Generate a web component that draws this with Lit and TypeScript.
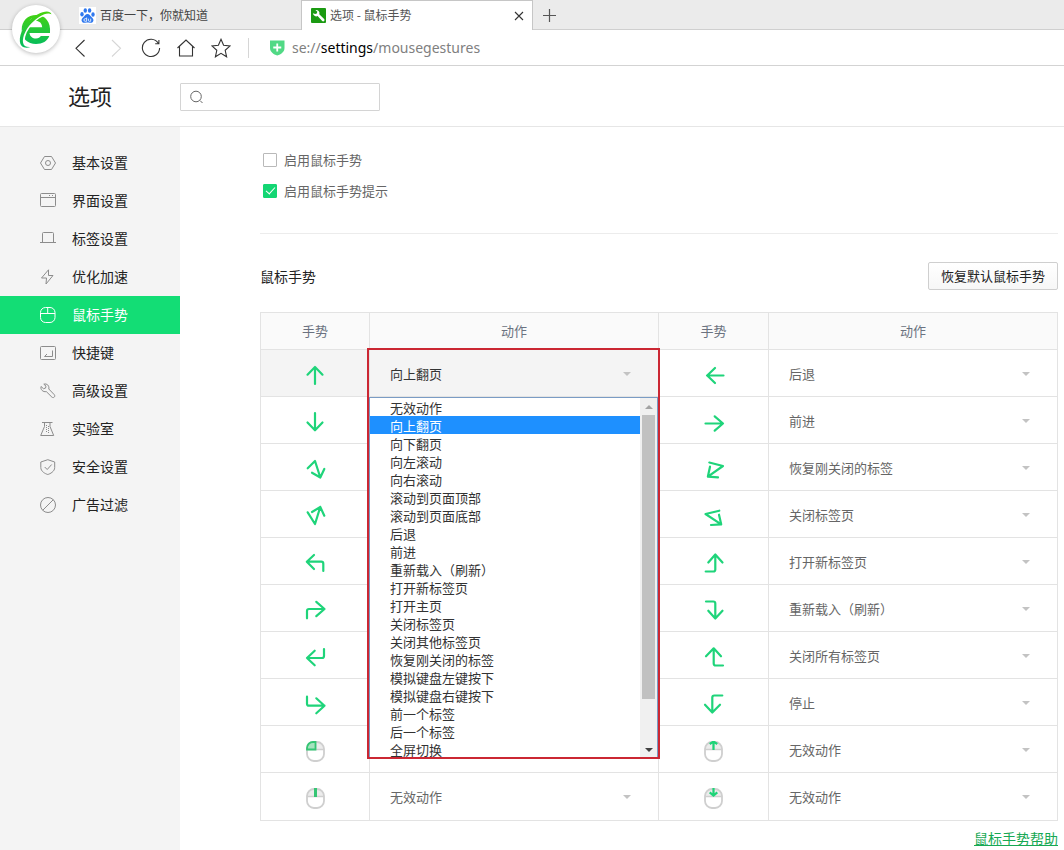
import { LitElement, html, svg, css, TemplateResult } from "lit";
import { customElement, property, state } from "lit/decorators.js";
import { classMap } from "lit/directives/class-map.js";

const FONT = css`"Noto Sans CJK SC", "Noto Sans", sans-serif`;

/* ---------- Actions offered for every gesture ---------- */
const ACTIONS = [
  "无效动作", "向上翻页", "向下翻页", "向左滚动", "向右滚动", "滚动到页面顶部", "滚动到页面底部",
  "后退", "前进", "重新载入（刷新）", "打开新标签页", "打开主页", "关闭标签页", "关闭其他标签页",
  "恢复刚关闭的标签", "模拟键盘左键按下", "模拟键盘右键按下", "前一个标签", "后一个标签", "全屏切换",
  "关闭所有标签页", "停止",
];

/* ---------- Gesture glyphs, 24 x 24 ---------- */
const stroke = (d: string) => svg`<path class="stroke" d=${d}></path>`;

const mouse = (inner: TemplateResult) => svg`
  <path d="M4 10.500V9a6 6 0 0 1 6-6h5a6 6 0 0 1 6 6v1.500z" fill="#ececec"></path>
  <path d="M12.500 3v7.500M4 10.500h17" fill="none" stroke="#cfcfcf" stroke-width="1.600"></path>
  <rect x="4" y="3" width="17" height="19" rx="7" fill="none" stroke="#cfcfcf" stroke-width="1.800"></rect>
  ${inner}`;

const GLYPHS: Record<string, TemplateResult> = {
  up: stroke("M12 21V4M4.500 11.700L12 4l7.500 7.700"),
  down: stroke("M12 3v17M4.500 12.500L12 20.300l7.500-7.800"),
  upDown: stroke("M4.700 11.300L12 4l5.300 16.500M9 15.700l8.300 4.800L21.300 12"),
  downUp: stroke("M4.700 8.300L12 20l5.300-17M9 8l8.300-5 4 8.700"),
  upLeft: stroke("M20.300 20v-7.300q0-2-2-2H4M11 4l-7.200 6.700L11 18"),
  upRight: stroke("M4 20.300V13q0-2 2-2h15.500M13.300 3.800L21.500 11l-8.200 7.200"),
  downLeft: stroke("M21 4v7q0 2-2 2H4M11.700 5.700L4 13l7.700 7.300"),
  downRight: stroke("M4 4.700v7q0 2 2 2h15.500M13.300 6.300l8.200 7.400-8.200 7.600"),
  left: stroke("M22.500 12.500H6M14 5l-7.800 7.500L14 20"),
  right: stroke("M4.500 13.500H22M13.700 6.300l8.300 7.200-8.300 7.200"),
  rightBack: stroke("M8.300 5.500L22 9 6.900 19.600M9 9.700L6.900 19.600l10.100.7"),
  leftBack: stroke("M18.300 6.700L4.500 10l15.700 10.300M18 10.700l2.200 9.600L10 21"),
  rightUp: stroke("M4.700 20.500h7.600q2 0 2-2V3.500M7.300 11.500l7-8 7.200 8"),
  rightDown: stroke("M5 3.500h7.300q2 0 2 2V20M7.300 12.700l7 7.800 7.200-7.800"),
  leftUp: stroke("M22 20.500h-7.300q-2 0-2-2V3.500M5 11.300l7.700-8 7.300 8"),
  leftDown: stroke("M21.300 3.500h-8q-2 0-2 2V20M4 12.700l7.300 7.800 7.700-7.800"),
  mouseLeft: mouse(svg`<path d="M4 10.500V9a6 6 0 0 1 6-6h2.500v7.500z" fill="#a5e3bf" stroke="#35c574" stroke-width="1.800"></path>`),
  mouseMid: mouse(svg`<path d="M12.500 2v9" stroke="#35c574" stroke-width="3"></path>`),
  mouseUp: mouse(svg`<path d="M12.500 11V3.500M8.700 5l3-2h1.600l3 2" fill="none" stroke="#1ed478" stroke-width="2.200"></path>`),
  mouseDown: mouse(svg`<path d="M12.500 2v7M8.700 6.300l3.800 3.200 3.800-3.200" fill="none" stroke="#1ed478" stroke-width="2.200"></path>`),
};

const ROWS: [string, string, string, string][] = [
  ["up", "向上翻页", "left", "后退"],
  ["down", "向下翻页", "right", "前进"],
  ["upDown", "滚动到页面底部", "rightBack", "恢复刚关闭的标签"],
  ["downUp", "滚动到页面顶部", "leftBack", "关闭标签页"],
  ["upLeft", "前一个标签", "rightUp", "打开新标签页"],
  ["upRight", "后一个标签", "rightDown", "重新载入（刷新）"],
  ["downLeft", "打开主页", "leftUp", "关闭所有标签页"],
  ["downRight", "全屏切换", "leftDown", "停止"],
  ["mouseLeft", "无效动作", "mouseUp", "无效动作"],
  ["mouseMid", "无效动作", "mouseDown", "无效动作"],
];

/* ---------- Browser frame ---------- */
@customElement("browser-chrome")
class BrowserChrome extends LitElement {
  static styles = css`
    :host { display: block; position: relative; font-family: ${FONT}; }
    button { border: 0; padding: 0; background: none; font: inherit; color: inherit; }
    svg { display: block; fill: none; }
    .tabs { display: flex; height: 30px; box-sizing: border-box; padding-left: 70px; background: #ebebeb; box-shadow: inset 0 -1px #cfcfcf; }
    .tab { display: flex; align-items: center; box-sizing: border-box; width: 231px; padding: 0 9px; gap: 4px; font-size: 12px; line-height: 18px; color: #444; }
    .tab.on { width: 232px; background: #fff; border: solid #c6c6c6; border-width: 1px 1px 0; padding: 0 8px 0 9px; color: #555; }
    .tab .name { flex: 1; text-align: left; padding-bottom: 1px; }
    .add { width: 33px; display: grid; place-items: center; }
    .tools { display: flex; align-items: center; height: 35px; padding-left: 63px; border-bottom: 1px solid #d3d3d3; background: #fff; }
    .tool { width: 35px; height: 35px; display: grid; place-items: center; color: #333; }
    .tool.off { color: #d6d6d6; }
    .tool svg { stroke: currentColor; stroke-width: 1.1; }
    .line { width: 1px; height: 20px; margin: 0 21px 0 10px; background: #d6d6d6; }
    .address { flex: 1; margin-left: 7px; font-family: "Noto Sans", sans-serif; font-size: 14px; line-height: 20px; color: #808080; }
    .address b { font-weight: 400; color: #000; }
    .logo { position: absolute; left: 12px; top: 5px; width: 48px; height: 48px; border-radius: 50%; background: #fff; box-shadow: 0 1px 4px #0004; }
  `;

  render() {
    return html`
      <div class="tabs">
        <button class="tab">
          <svg width="17" height="17" viewBox="0 0 17 17">
            <rect width="17" height="17" fill="#fff"></rect>
            <g fill="#2f78ee">
              <ellipse cx="3" cy="7.300" rx="1.700" ry="2.200"></ellipse>
              <ellipse cx="6.300" cy="3.500" rx="1.700" ry="2.300"></ellipse>
              <ellipse cx="10.600" cy="3.500" rx="1.700" ry="2.300"></ellipse>
              <ellipse cx="14" cy="7.500" rx="1.700" ry="2.200"></ellipse>
              <path d="M8.500 7c2 0 2.600 1.700 4 3 1.500 1.300 2.300 2.500 1.800 4-.5 1.800-2.300 2-3.600 1.700-1.500-.3-2.900-.3-4.400 0-1.300.3-3.100.1-3.600-1.700-.5-1.500.300-2.700 1.800-4C5.900 8.700 6.500 7 8.500 7z"></path>
            </g>
            <path d="M7.600 10.500v3.800H6.200a1.300 1.300 0 0 1 0-2.600h1.400M9.400 11.700v1.600q0 1 1 1h1.300v-2.600" stroke="#fff" stroke-width=".800"></path>
          </svg>
          <span class="name">百度一下，你就知道</span>
        </button>
        <div class="tab on">
          <svg width="15" height="15" viewBox="0 0 15 15">
            <rect width="15" height="15" rx="1" fill="#1b9a12"></rect>
            <path d="M2 5.200a3.300 3.300 0 0 0 4.600 2.900l4.600 4.800a1.300 1.300 0 0 0 1.900-1.900L8.300 6.300A3.300 3.300 0 0 0 4.400 2l1.900 1.800-.5 1.700-1.700.4z" fill="#fff"></path>
          </svg>
          <span class="name">选项 - 鼠标手势</span>
          <button aria-label="关闭标签页">
            <svg width="10" height="10" viewBox="0 0 10 10" stroke="#333" stroke-width="1.100"><path d="M1 1l8 8M9 1L1 9"></path></svg>
          </button>
        </div>
        <button class="add" aria-label="新建标签页">
          <svg width="13" height="13" viewBox="0 0 13 13" stroke="#555" stroke-width="1.200"><path d="M6.500 0v13M0 6.500h13"></path></svg>
        </button>
      </div>
      <div class="tools">
        <button class="tool" aria-label="后退">
          <svg width="20" height="20" viewBox="0 0 20 20"><path d="M13.500 2L5 10.300l8.500 8.200"></path></svg>
        </button>
        <button class="tool off" aria-label="前进">
          <svg width="20" height="20" viewBox="0 0 20 20"><path d="M6 2l8.500 8.300L6 18.500"></path></svg>
        </button>
        <button class="tool" aria-label="刷新">
          <svg width="20" height="20" viewBox="0 0 20 20"><path d="M17.300 5.300A8.600 8.600 0 1 0 18.600 10M17.900 2v3.700h-3.700"></path></svg>
        </button>
        <button class="tool" aria-label="主页">
          <svg width="20" height="20" viewBox="0 0 20 20"><path d="M1.500 10l8.500-8L18.500 10M3.500 8.500v9.500h13V8.500"></path></svg>
        </button>
        <button class="tool" aria-label="收藏">
          <svg width="20" height="20" viewBox="0 0 20 20"><path d="M10 1.300l2.600 6 6.500.6-4.900 4.400 1.400 6.500L10 15.400l-5.600 3.400 1.400-6.500L.9 7.900l6.500-.6z"></path></svg>
        </button>
        <span class="line"></span>
        <svg width="15" height="16" viewBox="0 0 15 16">
          <path d="M0 .500h14.500v7.500c0 4-3.500 6.300-7.250 7.500C3.500 14.300 0 12 0 8z" fill="#51d985"></path>
          <path d="M7.250 3.500v8M3.250 7.500h8" stroke="#fff" stroke-width="1.800"></path>
        </svg>
        <div class="address">se://<b>settings</b>/mousegestures</div>
      </div>
      <div class="logo">
        <svg width="48" height="48" viewBox="0 0 48 48">
          <defs>
            <linearGradient id="g" gradientUnits="userSpaceOnUse" x1="0" y1="8" x2="0" y2="40">
              <stop offset="0" stop-color="#45d30f"></stop>
              <stop offset="1" stop-color="#07bd5c"></stop>
            </linearGradient>
          </defs>
          <path fill-rule="evenodd" d="M38 28H17.500c.5 3.600 3 5.500 6.500 5.500 2.400 0 3.900-.9 4.800-2.500h8.500C35.500 36 30.500 39 24 39c-8.300 0-14.300-5.500-14.300-14.300C9.700 16 15.700 10 24.200 10 33.500 10 39 17 38 28zM17.700 22.300h12.500c-.4-4.200-2.700-6.300-6-6.300-3.600 0-6 2.200-6.500 6.300z" fill="url(#g)"></path>
          <path d="M39.300 9.500C32 9 22.500 15.500 17 23.500c-3.700 5.500-5 11-4 16L8 36l2-10 9-12L36 5z" fill="#fff"></path>
          <path d="M39.500 9.300C37.500 3.300 25 7.500 16.500 16.300 8.500 24.500 5.500 36.500 9.700 41c2 2 5.500 2 8.800 1-4.500.3-7-1-7.500-4.500-.7-6 3-13.500 8-18.800C26 11.300 35 6.300 39.500 9.300z" fill="url(#g)"></path>
        </svg>
      </div>
    `;
  }
}

/* ---------- Side navigation ---------- */
const NAV: [string, TemplateResult][] = [
  ["基本设置", svg`<path d="M4.500 1.500h7l4 6.500-4 6.500h-7L.5 8z"></path><circle cx="8" cy="8" r="2.500"></circle>`],
  ["界面设置", svg`<rect x=".5" y=".5" width="15" height="13" rx="1"></rect><path d="M.5 4.500h15M9 2.500h1M12 2.500h1"></path>`],
  ["标签设置", svg`<path d="M2.500 11.500v-9q0-1 1-1h9q1 0 1 1v9M0 11.500h16"></path>`],
  ["优化加速", svg`<path d="M8.500.8L1.500 9h5l-.5 6L13 6.500H8.500z"></path>`],
  ["鼠标手势", svg`<rect x=".5" y=".5" width="14.500" height="15" rx="5"></rect><path d="M.5 6.500H15M7.700.5v6"></path>`],
  ["快捷键", svg`<rect x=".5" y="1.500" width="15" height="13" rx="1"></rect><path d="M12.500 5.500v6h-8l2.500-2.500"></path>`],
  ["高级设置", svg`<path d="M1 3.500l2.500 2.200 2-.6.500-2L3.800 1.200C7 .2 9.500 2.700 8.800 6l5.500 5.700c1.400 1.800-.7 3.800-2.400 2.400L6.300 8.600C3 9.300.2 6.500 1 3.500z"></path>`],
  ["实验室", svg`<path d="M2 1.500h10.500M4.500 1.500v4L.7 14.500h13L10 5.500v-4"></path><path d="M6.500 4v7M8.500 5v7" stroke-dasharray="1 1"></path>`],
  ["安全设置", svg`<path d="M7.800.7l6.900 2.300v5.500c0 4-4.500 6.300-6.900 7C5.300 14.800.8 12.500.8 8.500V3zM4.700 8l2.500 2.500 4.500-5"></path>`],
  ["广告过滤", svg`<circle cx="8" cy="8" r="7.500"></circle><path d="M13.300 2.700L2.700 13.300"></path>`],
];

@customElement("side-nav")
class SideNav extends LitElement {
  @state() current = "鼠标手势";

  static styles = css`
    :host { display: block; flex: none; width: 180px; padding-top: 17px; box-sizing: border-box; background: #f4f4f4; font-family: ${FONT}; }
    .item { display: flex; align-items: center; gap: 16px; height: 38px; padding-left: 40px; font-size: 14px; line-height: 20px; color: #222; text-decoration: none; }
    .item.on { background: #13dd75; color: #fff; }
    .item span { padding-bottom: 2px; }
    svg { flex: none; fill: none; stroke: #8c8c8c; stroke-width: 1; }
    .on svg { stroke: #fff; }
  `;

  render() {
    return html`<nav>
      ${NAV.map(([name, icon]) => html`
        <a class=${classMap({ item: true, on: name === this.current })} href="#" @click=${(e: Event) => { e.preventDefault(); this.current = name; }}>
          <svg width="16" height="16" viewBox="0 0 16 16">${icon}</svg><span>${name}</span>
        </a>`)}
    </nav>`;
  }
}

/* ---------- One action cell ---------- */
@customElement("action-select")
class ActionSelect extends LitElement {
  @property() value = "";
  @property() label = "";
  @property({ type: Boolean, reflect: true }) open = false;

  static styles = css`
    :host { display: block; position: relative; font-family: ${FONT}; font-size: 13px; line-height: 18px; color: #666; }
    :host([open]) { background: #f4f4f4; color: #333; }
    select { font: inherit; color: inherit; border: 0; border-radius: 0; background: none; outline: 0; margin: 0; appearance: none; }
    .field { display: grid; align-items: center; }
    .closed { grid-area: 1 / 1; width: 100%; height: 46px; padding: 1px 46px 0 20px; }
    .arrow { grid-area: 1 / 1; justify-self: end; margin-right: 27px; margin-top: 2px; pointer-events: none; fill: #c3c3c3; }
    .popup { position: absolute; z-index: 1; left: -1px; right: 0; top: 47px; display: flex; height: 360px; background: #fff; border: 1px solid #7a9cc4; }
    .list { flex: 1; height: 360px; padding: 0; overflow-y: scroll; scrollbar-width: none; color: #333; }
    .list option { box-sizing: border-box; height: 18px; min-height: 18px; padding: 0 0 0 20px; line-height: 16px; }
    .list option:checked { background: #1e90ff; color: #fff; }
    .scroll { display: flex; flex-direction: column; align-items: center; width: 17px; background: #f0f0f0; }
    .scroll button { border: 0; padding: 0; width: 17px; height: 17px; background: none; display: grid; place-items: center; }
    .track { flex: 1; width: 13px; }
    .thumb { height: 87%; background: #c1c1c1; }
    .mark { position: absolute; z-index: 2; left: -3px; right: -2px; top: -2px; height: 411px; box-sizing: border-box; border: 2px solid #cb2733; pointer-events: none; }
  `;

  private options() {
    return ACTIONS.map((a) => html`<option ?selected=${a === this.value}>${a}</option>`);
  }

  render() {
    return html`
      <div class="field">
        <select class="closed" aria-label=${this.label}>${this.options()}</select>
        <svg class="arrow" width="8" height="4" viewBox="0 0 8 4"><path d="M0 0h8L4 4z"></path></svg>
      </div>
      ${this.open ? html`
        <div class="popup">
          <select class="list" size="20" aria-label="${this.label} 选项">${this.options()}</select>
          <div class="scroll">
            <button aria-label="向上"><svg width="8" height="4" viewBox="0 0 8 4"><path d="M0 4h8L4 0z" fill="#a3a3a3"></path></svg></button>
            <div class="track"><div class="thumb"></div></div>
            <button aria-label="向下"><svg width="8" height="4" viewBox="0 0 8 4"><path d="M0 0h8L4 4z" fill="#404040"></path></svg></button>
          </div>
        </div>
        <div class="mark"></div>` : ""}
    `;
  }
}

/* ---------- Page ---------- */
@customElement("app-root")
class AppRoot extends LitElement {
  static styles = css`
    :host { display: flex; flex-direction: column; min-height: 100vh; background: #fff; font-family: ${FONT}; font-size: 13px; line-height: 20px; color: #666; }
    .top { display: flex; align-items: center; height: 60px; border-bottom: 1px solid #e6e6e6; }
    h1 { margin: 0; width: 180px; box-sizing: border-box; padding: 0 0 2px 68px; font-size: 22px; line-height: 32px; font-weight: 400; color: #222; }
    .search { display: flex; align-items: center; gap: 6px; box-sizing: border-box; width: 200px; height: 28px; margin-top: 2px; padding: 0 9px; border: 1px solid #d4d4d4; border-radius: 1px; }
    .search input { flex: 1; min-width: 0; border: 0; padding: 0; outline: 0; background: none; font: inherit; color: #333; }
    .body { flex: 1; display: flex; }
    main { flex: 1; min-width: 0; padding: 17px 6px 0 80px; }
    .check { display: flex; align-items: center; gap: 7px; height: 31px; padding-left: 3px; }
    .check input { appearance: none; margin: 0; width: 14px; height: 14px; border: 1px solid #b9b9b9; border-radius: 1px; display: grid; place-items: center; }
    .check input:checked { border-color: #13d673; background: #13d673; }
    .check input:checked::before { content: ""; width: 8px; height: 4px; border: solid #fff; border-width: 0 0 1px 1px; transform: translateY(-1px) rotate(-48deg); }
    .options { padding-bottom: 27px; border-bottom: 1px solid #ececec; }
    .head { display: flex; justify-content: space-between; align-items: center; margin: 28px 0 22px; }
    h2 { margin: 0; font-size: 14px; line-height: 20px; font-weight: 400; color: #222; }
    .reset { height: 28px; box-sizing: border-box; padding: 0 12px; border: 1px solid #cfcfcf; border-radius: 2px; background: linear-gradient(#fff, #f7f7f7); font: inherit; color: #222; }
    table { width: 100%; table-layout: fixed; border-collapse: separate; border-spacing: 0; border: solid #e3e3e3; border-width: 1px 0 0 1px; }
    .c1 { width: 109px; }
    .c3 { width: 110px; }
    th, td { padding: 0; border: solid #e3e3e3; border-width: 0 1px 1px 0; vertical-align: top; }
    th { height: 36px; vertical-align: middle; background: #fafafa; font-weight: 400; color: #6b7280; }
    .glyph { height: 42px; padding: 4px 0 0 42px; }
    .glyph.on { background: #f4f4f4; }
    .glyph svg { display: block; margin-top: 9px; }
    .stroke { fill: none; stroke: #1fd47a; stroke-width: 2.2; stroke-linecap: round; stroke-linejoin: round; }
    tr:last-child td { padding-bottom: 1px; }
    .help { margin-top: 7px; text-align: right; font-size: 14px; line-height: 20px; }
    .help a { color: #17a854; }
  `;

  private cells(glyph: string, action: string, open: boolean) {
    return html`
      <td class=${classMap({ glyph: true, on: open })}><svg width="24" height="24" viewBox="0 0 24 24">${GLYPHS[glyph]}</svg></td>
      <td><action-select .value=${action} .label=${"动作：" + action} .open=${open}></action-select></td>`;
  }

  render() {
    return html`
      <browser-chrome></browser-chrome>
      <header class="top">
        <h1>选项</h1>
        <label class="search">
          <svg width="14" height="14" viewBox="0 0 14 14" fill="none" stroke="#666"><circle cx="6" cy="6.500" r="5.300"></circle><path d="M10 10.500l2.500 2.500"></path></svg>
          <input type="text" aria-label="搜索设置">
        </label>
      </header>
      <div class="body">
        <side-nav></side-nav>
        <main>
          <div class="options">
            <label class="check"><input type="checkbox">启用鼠标手势</label>
            <label class="check"><input type="checkbox" checked>启用鼠标手势提示</label>
          </div>
          <div class="head">
            <h2>鼠标手势</h2>
            <button class="reset">恢复默认鼠标手势</button>
          </div>
          <table>
            <colgroup><col class="c1"><col><col class="c3"><col></colgroup>
            <thead><tr><th>手势</th><th>动作</th><th>手势</th><th>动作</th></tr></thead>
            <tbody>
              ${ROWS.map(([g1, a1, g2, a2], i) => html`<tr>${this.cells(g1, a1, i === 0)}${this.cells(g2, a2, false)}</tr>`)}
            </tbody>
          </table>
          <div class="help"><a href="#">鼠标手势帮助</a></div>
        </main>
      </div>
    `;
  }
}
